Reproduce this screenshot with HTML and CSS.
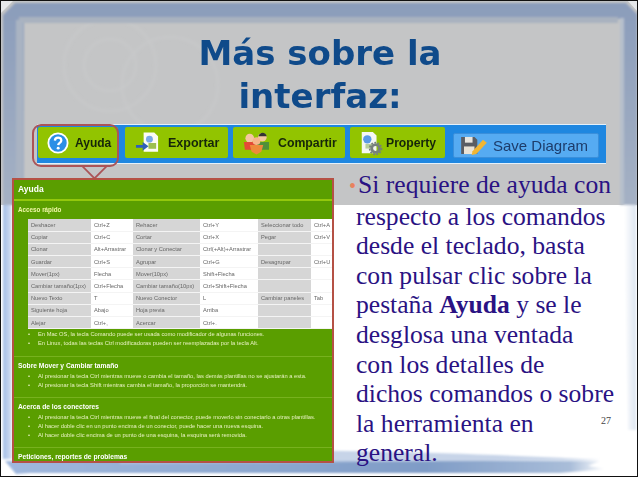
FILE: index.html
```
<!DOCTYPE html>
<html lang="es">
<head>
<meta charset="utf-8">
<title>Más sobre la interfaz</title>
<link rel="stylesheet" href="styles.css">
</head>
<body>
<main class="slide">
  <svg class="frame" viewBox="0 0 638 479" aria-hidden="true">
    <defs>
      <linearGradient id="bl" x1="0" x2="1" y1="0" y2="0"><stop offset="0" stop-color="#a3bde6"/><stop offset=".6" stop-color="#c6d6f0"/><stop offset="1" stop-color="#fff"/></linearGradient>
      <linearGradient id="br" x1="0" x2="1" y1="0" y2="0"><stop offset="0" stop-color="#fff"/><stop offset=".5" stop-color="#eef2f8"/><stop offset="1" stop-color="#dce5f0"/></linearGradient>
      <linearGradient id="bb" x1="0" x2="1" y1="0" y2="0"><stop offset="0" stop-color="#a0b8de"/><stop offset=".7" stop-color="#7f9cc6"/><stop offset=".94" stop-color="#a9bdd9"/><stop offset="1" stop-color="#fff"/></linearGradient>
      <linearGradient id="tb" x1="0" x2="0" y1="0" y2="1"><stop offset="0" stop-color="#8b9dbb"/><stop offset="1" stop-color="#a5b1c4"/></linearGradient>
      <filter id="soft"><feGaussianBlur stdDeviation=".8"/></filter>
      <filter id="softer"><feGaussianBlur stdDeviation="1.6"/></filter>
    </defs>
    <rect width="638" height="479" fill="#fff"/>
    <rect width="638" height="205" fill="#c4c5c6"/>
    <g fill="none" stroke="#c8c9ca" stroke-width="2" filter="url(#softer)"><circle cx="110" cy="65" r="46"/><circle cx="110" cy="65" r="26"/><circle cx="170" cy="85" r="48"/></g>
    <g filter="url(#soft)">
      <path d="M15 3H626L637 14V205H621V19H24V205H3V15Z" fill="url(#tb)"/>
      <path d="M19 17H618V23H19Z" fill="#a9b2bf"/>
      <path d="M16 20H23V205H16Z" fill="#a9b3c2"/>
      <path d="M620 18H624V205H620Z" fill="#b6bfcc"/>
      <path d="M3 205H12V440L14 459H3Z" fill="url(#bl)"/>
      <path d="M624 205H636V430H628Z" fill="url(#br)"/>
      <path d="M14 461H600L588 466L606 469L560 473H30L16 474L5 461Z" fill="url(#bb)"/>
      <path d="M120 452C220 448 420 450 600 460L120 464Z" fill="#b4c6e0" opacity=".75"/>
    </g>
    <path d="M0 0H14L0 14Z" fill="#e6e8ea"/>
    <path d="M638 0H627L638 12Z" fill="#e6e8ea"/>
    <path d="M0 460L16 476H0Z" fill="#fff"/>
    <path d="M0 .5H638M.5 0V476M637.5 0V476M0 476.500H638" stroke="#111" stroke-width="1" fill="none"/>
  </svg>

  <h1 class="title">Más sobre la<br>interfaz:</h1>

  <nav class="toolbar">
    <div class="tab tab-help">
      <svg class="ico" viewBox="0 0 24 24" aria-hidden="true"><circle cx="12" cy="12" r="10.500" fill="#2b8fe6" stroke="#fff" stroke-width="2"/><path d="M8.600 9.400C8.800 4.900 15.600 5 15.600 9.200C15.600 11.700 12.300 11.900 12.200 14.300" fill="none" stroke="#fff" stroke-width="2.500"/><circle cx="12.200" cy="17.600" r="1.600" fill="#fff"/></svg>
      <span>Ayuda</span>
      <span class="callout"></span>
    </div>
    <div class="tab tab-export">
      <svg class="ico-export" viewBox="0 0 26 24" aria-hidden="true"><path d="M9 1H20L24 5V21H9Z" fill="#fbfbf5"/><circle cx="15" cy="8" r="3.600" fill="#79a8e8"/><rect x="14" y="12" width="8" height="6" fill="#9cc050"/><path d="M1 14H8V11L14 15.500L8 20V17H1Z" fill="#2f5fb8"/></svg>
      <span>Exportar</span>
    </div>
    <div class="tab tab-share">
      <svg class="ico-share" viewBox="0 0 28 24" aria-hidden="true"><circle cx="20" cy="6" r="4.500" fill="#f3c9a0"/><path d="M16 5C17 0 24 0 24.500 5Z" fill="#333"/><path d="M14 11H27V19H14Z" fill="#4f8f3a"/><circle cx="7" cy="7" r="4.500" fill="#f5c5a0"/><path d="M1 11H13V19H2Z" fill="#e44a36"/><circle cx="14" cy="10" r="4" fill="#f6b58c"/><path d="M7 14H21L19 21L14 24L9 21Z" fill="#ee8a3c"/></svg>
      <span>Compartir</span>
    </div>
    <div class="tab tab-prop">
      <svg class="ico-prop" viewBox="0 0 26 26" aria-hidden="true"><path d="M3 1H15L19 5V24H3Z" fill="#f5f7f3"/><circle cx="9" cy="9" r="4.500" fill="#5b9ae6"/><rect x="7" y="14" width="7" height="5" fill="#b7cf9b"/><circle cx="18" cy="19" r="4.200" fill="none" stroke="#77807c" stroke-width="3"/><circle cx="18" cy="19" r="6.400" fill="none" stroke="#77807c" stroke-width="1.800" stroke-dasharray="2 1.500"/></svg>
      <span>Property</span>
    </div>
    <button class="save" type="button">
      <svg class="ico-save" viewBox="0 0 28 20" aria-hidden="true"><path d="M1 1H15L18 4V19H1Z" fill="#5a5d63"/><rect x="5" y="1" width="8" height="6" fill="#e9e6df"/><rect x="4" y="11" width="11" height="8" fill="#e9e3d6"/><path d="M13 16L24 4L28 7L17 19L12 20Z" fill="#f2b632"/></svg>
      <span>Save Diagram</span>
    </button>
  </nav>

  <section class="content">
    <article class="help">
      <h2 class="help-title">Ayuda</h2>
      <h3 class="help-first">Acceso rápido</h3>
      <table class="keys">
        <tr><th>Deshacer</th><td>Ctrl+Z</td><th>Rehacer</th><td>Ctrl+Y</td><th>Seleccionar todo</th><td>Ctrl+A</td></tr>
        <tr><th>Copiar</th><td>Ctrl+C</td><th>Cortar</th><td>Ctrl+X</td><th>Pegar</th><td>Ctrl+V</td></tr>
        <tr><th>Clonar</th><td>Alt+Arrastrar</td><th>Clonar y Conectar</th><td>Ctrl(+Alt)+Arrastrar</td><th></th><td></td></tr>
        <tr><th>Guardar</th><td>Ctrl+S</td><th>Agrupar</th><td>Ctrl+G</td><th>Desagrupar</th><td>Ctrl+U</td></tr>
        <tr><th>Mover(1px)</th><td>Flecha</td><th>Mover(10px)</th><td>Shift+Flecha</td><th></th><td></td></tr>
        <tr><th>Cambiar tamaño(1px)</th><td>Ctrl+Flecha</td><th>Cambiar tamaño(10px)</th><td>Ctrl+Shift+Flecha</td><th></th><td></td></tr>
        <tr><th>Nuevo Texto</th><td>T</td><th>Nuevo Conector</th><td>L</td><th>Cambiar paneles</th><td>Tab</td></tr>
        <tr><th>Siguiente hoja</th><td>Abajo</td><th>Hoja previa</th><td>Arriba</td><th></th><td></td></tr>
        <tr><th>Alejar</th><td>Ctrl+,</td><th>Acercar</th><td>Ctrl+.</td><th></th><td></td></tr>
      </table>
      <ul class="notes notes-first">
        <li>En Mac OS, la tecla Comando puede ser usada como modificador de algunas funciones.</li>
        <li>En Linux, todas las teclas Ctrl modificadoras pueden ser reemplazadas por la tecla Alt.</li>
      </ul>
      <div class="group group-move">
        <h3 class="help-sub">Sobre Mover y Cambiar tamaño</h3>
        <ul class="notes">
          <li>Al presionar la tecla Ctrl mientras mueve o cambia el tamaño, las demás plantillas no se ajustarán a esta.</li>
          <li>Al presionar la tecla Shift mientras cambia el tamaño, la proporción se mantendrá.</li>
        </ul>
      </div>
      <div class="group group-links">
        <h3 class="help-sub">Acerca de los conectores</h3>
        <ul class="notes">
          <li>Al presionar la tecla Ctrl mientras mueve el final del conector, puede moverlo sin conectarlo a otras plantillas.</li>
          <li>Al hacer doble clic en un punto encima de un conector, puede hacer una nueva esquina.</li>
          <li>Al hacer doble clic encima de un punto de una esquina, la esquina será removida.</li>
        </ul>
      </div>
      <div class="group">
        <h3 class="help-sub">Peticiones, reportes de problemas</h3>
      </div>
    </article>
    <div class="body-text">
      <p><span class="dot">•</span>Si requiere de ayuda con<br>respecto a los comandos<br>desde el teclado, basta<br>con pulsar clic sobre la<br>pestaña <b>Ayuda</b> y se le<br>desglosa una ventada<br>con los detalles de<br>dichos comandos o sobre<br>la herramienta en<br>general.</p>
      <span class="page-no">27</span>
    </div>
  </section>
</main>
</body>
</html>
```
FILE: styles.css
```
* { box-sizing: border-box; }
html, body { margin: 0; padding: 0; background: #fff; }
.slide { position: relative; width: 638px; height: 479px; overflow: hidden; display: flex; flex-direction: column; font-family: "Liberation Sans", Arial, sans-serif; }
.frame { position: absolute; inset: 0; width: 638px; height: 479px; }
.title { position: relative; margin: 32px 0 0 0; width: 640px; text-align: center; font: bold 34px/43px "DejaVu Sans", Verdana, sans-serif; color: #0f4a8a; filter: blur(.3px); }
.toolbar { position: relative; margin: 6px 0 0 37px; width: 569px; height: 40px; display: flex; align-items: flex-start; padding: 2px 0 0 1px; background: #1f87e0; border-top: 1px solid #e4f1fb; border-bottom: 1px solid #e4f1fb; filter: blur(.25px); }
.tab { position: relative; height: 31px; display: flex; align-items: center; background: #92c400; border-radius: 2px; font-weight: bold; color: #16260a; }
.tab-help { width: 80px; padding-left: 9px; gap: 6px; font-size: 12px; }
.tab-export { width: 103px; margin-left: 7px; padding-left: 10px; gap: 8px; font-size: 12.500px; }
.tab-share { width: 112px; margin-left: 5px; padding-left: 10px; gap: 8px; font-size: 12.300px; }
.tab-prop { width: 95px; margin-left: 5px; padding-left: 9px; gap: 3px; font-size: 12.200px; }
.ico { width: 22px; height: 22px; flex: none; }
.ico-export { width: 25px; height: 24px; flex: none; }
.ico-share { width: 27px; height: 24px; flex: none; }
.ico-prop { width: 24px; height: 26px; flex: none; }
.ico-save { width: 27px; height: 19px; flex: none; }
.callout { position: absolute; left: -6px; top: -3px; width: 87px; height: 43px; border: 2px solid #ab5458; border-radius: 9px; }
.callout::after { content: ""; position: absolute; left: 51px; top: 31px; width: 17px; height: 17px; border-right: 2px solid #ab5458; border-bottom: 2px solid #ab5458; transform: rotate(45deg); clip-path: polygon(100% 0, 100% 100%, 0 100%); }
.save { height: 25px; width: 146px; margin: 6px 0 0 8px; padding: 0 0 0 6px; display: flex; align-items: center; gap: 6px; background: #56abf2; border: 1px solid #3a8fdb; border-radius: 2px; font: 15px "Liberation Sans", Arial, sans-serif; color: #1d3c6b; }
.content { position: relative; display: flex; align-items: flex-start; margin-top: 6px; }
.help { width: 322px; height: 285px; margin: 8px 0 0 12px; background: #5a9e00; border: 2px solid #b55145; color: #f2f8e0; overflow: hidden; filter: blur(.35px); }
.help-title { margin: 0; height: 19px; padding: 2px 0 0 4px; font-size: 8.500px; line-height: 14px; color: #fff; }
.help-first { margin: 0 0 2px; height: 18px; padding: 4px 0 0 4px; border-top: 2px solid #93c80c; font-size: 6.300px; line-height: 9px; color: #f1f7a8; }
.help-sub { margin: 0; padding-left: 4px; font-size: 6.700px; line-height: 9px; color: #fff; }
.keys { border-collapse: collapse; table-layout: fixed; width: 305px; margin-left: 14px; font-size: 5.700px; color: #666; }
.keys th, .keys td { height: 12.200px; padding: 0 0 0 3px; font-weight: normal; text-align: left; white-space: nowrap; overflow: hidden; border-bottom: 1px solid #f4f4f4; }
.keys th { background: #d6d6d6; }
.keys td { background: #fff; }
.keys tr > :nth-child(1) { width: 63px; }
.keys tr > :nth-child(2) { width: 42px; }
.keys tr > :nth-child(3) { width: 67px; }
.keys tr > :nth-child(4) { width: 58px; }
.keys tr > :nth-child(5) { width: 53px; }
.notes { margin: 0; padding: 0 0 0 24px; list-style: none; font-size: 5.750px; line-height: 8.700px; color: #e8f2c0; white-space: nowrap; }
.notes li { position: relative; }
.notes li::before { content: "•"; position: absolute; left: -10px; }
.notes-first { margin-top: 1px; height: 26px; }
.group { height: 16px; padding-top: 4px; border-top: 1px solid #77b21e; }
.group-move { height: 41px; }
.group-links { height: 50px; }
.group .notes { margin-top: 2px; }
.body-text { position: relative; width: 268px; margin-left: 15px; font: 25.600px/29.600px "Liberation Serif", "Times New Roman", serif; color: #2a1283; white-space: nowrap; }
.body-text p { margin: 0; padding-left: 7px; text-indent: -7px; }
.dot { display: inline-block; width: 9px; text-indent: 0; color: #e8825e; font-size: 20px; }
.page-no { position: absolute; left: 252px; top: 245px; font-size: 10px; line-height: 12px; color: #444; }
```
